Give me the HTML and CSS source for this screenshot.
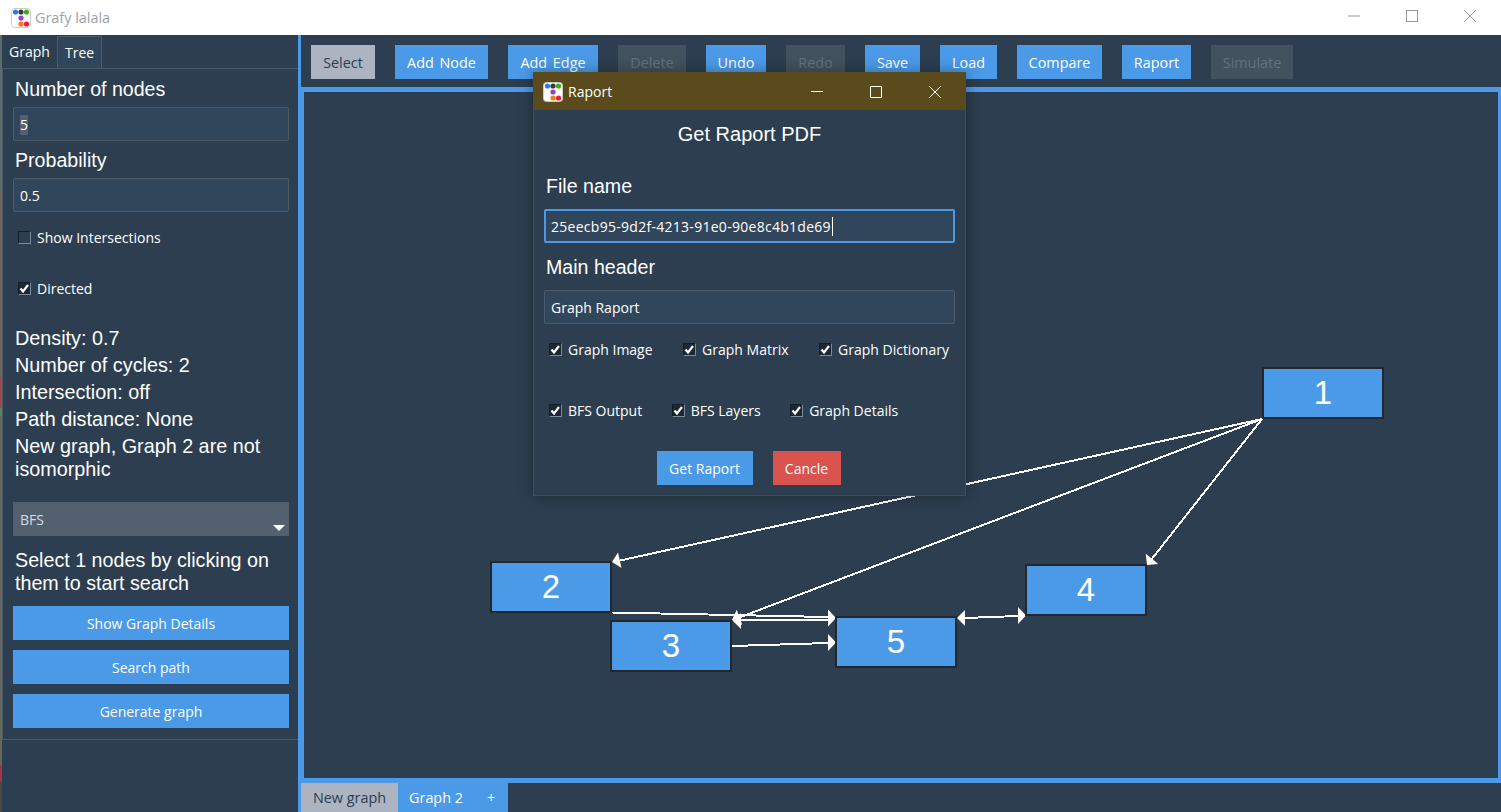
FILE: index.html
```html
<!DOCTYPE html>
<html lang="en">
<head>
  <meta charset="UTF-8" />
  <title>Grafy lalala</title>
  <link rel="stylesheet" href="styles.css">
</head>
<body>

  <svg class="sprites" width="0" height="0">
    <symbol id="appicon" viewBox="0 0 20 20">
      <rect x="0.5" y="0.5" width="19" height="19" rx="3" fill="#fff" stroke="#ccc"/>
      <circle cx="4.5" cy="4" r="2.6" fill="#2f7de0"/>
      <circle cx="10" cy="4" r="2.6" fill="#3a3a3a"/>
      <circle cx="15.5" cy="4" r="2.6" fill="#3fae1e"/>
      <circle cx="10" cy="10" r="2.6" fill="#8e44c4"/>
      <circle cx="10" cy="16" r="2.6" fill="#f47a1c"/>
      <circle cx="15.5" cy="16" r="2.6" fill="#ee1c3c"/>
    </symbol>
    <symbol id="tick" viewBox="0 0 11 11">
      <path d="M1.5 5.5l2.5 3L9 2" fill="none" stroke="#fff" stroke-width="2.2"/>
    </symbol>
  </svg>

  <header class="titlebar">
    <svg class="app-icon"><use href="#appicon"/></svg>
    <span class="app-title">Grafy lalala</span>
    <div class="win-controls">
      <svg width="14" height="14" viewBox="0 0 14 14"><path d="M1 7h12" stroke="#999" fill="none"/></svg>
      <svg width="14" height="14" viewBox="0 0 14 14"><path d="M1.5 1.5h11v11h-11z" stroke="#999" fill="none"/></svg>
      <svg width="14" height="14" viewBox="0 0 14 14"><path d="M1 1l12 12M13 1L1 13" stroke="#999" fill="none"/></svg>
    </div>
  </header>

  <main class="app">
    <div class="desktop-edge"></div>

    <aside class="sidebar">
      <div class="side-tabs">
        <div class="side-tab active">Graph</div>
        <div class="side-tab">Tree</div>
      </div>
      <div class="panel">
        <div class="label">Number of nodes</div>
        <div class="field"><span class="selected">5</span></div>
        <div class="label prob-label">Probability</div>
        <div class="field">0.5</div>
        <div class="check check-first"><span class="box"></span>Show Intersections</div>
        <div class="check check-second"><span class="box on"><svg><use href="#tick"/></svg></span>Directed</div>
        <ul class="stats">
          <li>Density: 0.7</li>
          <li>Number of cycles: 2</li>
          <li>Intersection: off</li>
          <li>Path distance: None</li>
          <li class="iso">New graph, Graph 2 are not isomorphic</li>
        </ul>
        <div class="select">BFS<span class="caret"></span></div>
        <p class="hint">Select 1 nodes by clicking on them to start search</p>
        <button class="btn wide">Show Graph Details</button>
        <button class="btn wide">Search path</button>
        <button class="btn wide">Generate graph</button>
      </div>
    </aside>

    <section class="workspace">
      <nav class="toolbar">
        <button class="btn current t-select">Select</button>
        <button class="btn t-node">Add Node</button>
        <button class="btn t-edge">Add Edge</button>
        <button class="btn off t-delete">Delete</button>
        <button class="btn t-undo">Undo</button>
        <button class="btn off t-redo">Redo</button>
        <button class="btn t-save">Save</button>
        <button class="btn t-load">Load</button>
        <button class="btn t-compare">Compare</button>
        <button class="btn t-raport">Raport</button>
        <button class="btn off t-simulate">Simulate</button>
      </nav>

      <div class="canvas">
        <svg class="edges" width="1194" height="686" viewBox="304 92 1194 686">
          <g stroke="#fff" stroke-width="2" fill="none" shape-rendering="crispEdges">
            <path d="M1262 419L618 561"/>
            <path d="M1262 419L738 618"/>
            <path d="M1262 419L1151 560"/>
            <path d="M612 612.5L828 617"/>
            <path d="M738 620L828 620"/>
            <path d="M732 646L828 643"/>
            <path d="M965 618L1018 616"/>
          </g>
          <g fill="#fff">
            <polygon points="612,562 621.5,568 618,552.5"/>
            <polygon points="732,620 742.3,625 736.7,609.7"/>
            <polygon points="733,621 741,613 741,629"/>
            <polygon points="1147,565 1158.3,564 1145.7,553.7"/>
            <polygon points="836,618 828,609.5 828,626.5"/>
            <polygon points="836,642.5 828,634 828,651"/>
            <polygon points="957,618 965,610 965,626"/>
            <polygon points="1026,615.5 1018,607 1018,624"/>
          </g>
        </svg>
        <div class="node n1">1</div>
        <div class="node n2">2</div>
        <div class="node n3">3</div>
        <div class="node n4">4</div>
        <div class="node n5">5</div>
      </div>

      <div class="graph-tabs">
        <div class="graph-tab active">New graph</div>
        <div class="graph-tab">Graph 2</div>
        <div class="graph-tab add">+</div>
      </div>
    </section>
  </main>

  <div class="dialog">
    <div class="dialog-title">
      <svg class="app-icon"><use href="#appicon"/></svg>
      <span class="dialog-name">Raport</span>
      <div class="win-controls">
        <svg width="14" height="14" viewBox="0 0 14 14"><path d="M1 6.5h12" stroke="#fff" fill="none"/></svg>
        <svg width="14" height="14" viewBox="0 0 14 14"><path d="M1.5 1.5h11v11h-11z" stroke="#fff" fill="none"/></svg>
        <svg width="14" height="14" viewBox="0 0 14 14"><path d="M1 1l12 12M13 1L1 13" stroke="#fff" fill="none"/></svg>
      </div>
    </div>
    <div class="dialog-body">
      <h2>Get Raport PDF</h2>
      <div class="label file-label">File name</div>
      <div class="field focus"><span class="typed">25eecb95-9d2f-4213-91e0-90e8c4b1de69</span></div>
      <div class="label header-label">Main header</div>
      <div class="field">Graph Raport</div>
      <div class="check-row row-one">
        <div class="check"><span class="box on"><svg><use href="#tick"/></svg></span>Graph Image</div>
        <div class="check"><span class="box on"><svg><use href="#tick"/></svg></span>Graph Matrix</div>
        <div class="check"><span class="box on"><svg><use href="#tick"/></svg></span>Graph Dictionary</div>
      </div>
      <div class="check-row row-two">
        <div class="check"><span class="box on"><svg><use href="#tick"/></svg></span>BFS Output</div>
        <div class="check"><span class="box on"><svg><use href="#tick"/></svg></span>BFS Layers</div>
        <div class="check"><span class="box on"><svg><use href="#tick"/></svg></span>Graph Details</div>
      </div>
      <div class="dialog-actions">
        <button class="btn get-raport">Get Raport</button>
        <button class="btn danger">Cancle</button>
      </div>
    </div>
  </div>

</body>
</html>
```

FILE: styles.css
```css
* {
  box-sizing: border-box;
}
html, body {
  margin: 0;
  height: 100%;
  overflow: hidden;
}
body {
  position: relative;
  display: flex;
  flex-direction: column;
  width: 1501px;
  height: 812px;
  background: #2c3e50;
  color: #fff;
  font-family: "Open Sans", "Noto Sans", sans-serif;
  font-size: 14px;
}
.sprites {
  position: absolute;
}

/* window chrome */
.titlebar {
  flex: none;
  display: flex;
  align-items: center;
  height: 35px;
  padding-left: 11px;
  background: #fff;
}
.app-icon {
  width: 20px;
  height: 20px;
}
.app-title {
  margin-left: 4px;
  padding-bottom: 1px;
  color: #9aa3ad;
  font-size: 14.4px;
}
.win-controls {
  display: flex;
  gap: 44px;
  margin-left: auto;
  padding-right: 24px;
}
.titlebar .win-controls {
  margin-bottom: 3px;
}

.app {
  flex: 1;
  display: flex;
  min-height: 0;
}
.desktop-edge {
  flex: none;
  width: 2px;
  background: linear-gradient(#5e6a6e 0 20%, #6f6658 20% 44%, #a14a48 44% 48%, #4f8a5a 48% 49%, #66685f 49% 94%, #a8324a 94% 96%, #4a4a45 96% 100%);
}

/* left panel */
.sidebar {
  flex: none;
  width: 296px;
}
.side-tabs {
  display: flex;
  height: 34px;
  padding-top: 1px;
  border-bottom: 1px solid #4a5b6c;
}
.side-tab {
  padding: 0 7px;
  line-height: 32px;
  border-right: 1px solid #4a5b6c;
}
.side-tab:first-child {
  width: 56px;
}
.side-tab:last-child {
  width: 44px;
  background: #32465b;
  border-top: 1px solid #4a5b6c;
}
.panel {
  padding: 8px 9px 11px 10px;
  border-bottom: 1px solid #4a5b6c;
  border-left: 1px solid #4a5b6c;
}
.label {
  height: 24px;
  margin-bottom: 6px;
  font-family: "Liberation Sans", Arial, sans-serif;
  font-size: 19.6px;
  line-height: 24px;
}
.panel .label {
  margin-left: 2px;
}
.prob-label {
  margin-top: 7px;
}
.field {
  height: 34px;
  padding: 0 6px;
  line-height: 34px;
  background: #32465b;
  border: 1px solid #4a5b6c;
  border-radius: 2px;
}
.selected {
  display: inline-block;
  height: 20px;
  line-height: 20px;
  background: #526070;
}
.field.focus {
  line-height: 32px;
  border: 2px solid #4b9ae8;
  padding: 0 5px;
}
.typed {
  padding-right: 1px;
  border-right: 1px solid #fff;
  letter-spacing: 0.28px;
}
.check {
  display: flex;
  align-items: center;
  gap: 6px;
  height: 20px;
  white-space: nowrap;
}
.panel .check {
  padding-left: 5px;
}
.check-first {
  margin-top: 15px;
}
.check-second {
  margin-top: 31px;
}
.box {
  flex: none;
  width: 13px;
  height: 13px;
  border: 1px solid;
  border-color: #141e28 #7f8b96 #7f8b96 #141e28;
}
.box.on {
  background: #1b2733;
}
.box svg {
  display: block;
  width: 11px;
  height: 11px;
}
.stats {
  margin: 27px 0 0;
  padding: 0 0 0 2px;
  list-style: none;
  font-family: "Liberation Sans", Arial, sans-serif;
  font-size: 19.8px;
  line-height: 27px;
}
.stats .iso {
  padding-top: 2px;
  line-height: 23px;
}
.select {
  position: relative;
  height: 34px;
  margin-top: 21px;
  padding: 0 7px;
  line-height: 36px;
  background: #526070;
  color: #d5dae0;
}
.caret {
  position: absolute;
  right: 4px;
  bottom: 5px;
  border-left: 6px solid transparent;
  border-right: 6px solid transparent;
  border-top: 6px solid #fff;
}
.hint {
  margin: 13px 0 11px 2px;
  font-family: "Liberation Sans", Arial, sans-serif;
  font-size: 19.7px;
  line-height: 23px;
}
.btn {
  height: 34px;
  padding: 0 12px;
  border: none;
  background: #4b9ae8;
  color: #fff;
  font-family: inherit;
  font-size: 14px;
}
.wide {
  display: block;
  width: 100%;
  margin-bottom: 10px;
}
.wide:last-child {
  margin-bottom: 0;
}

/* right side */
.workspace {
  flex: 1;
  display: flex;
  flex-direction: column;
  min-width: 0;
  border-left: 3px solid #4b9ae8;
}
.toolbar {
  flex: none;
  display: flex;
  gap: 20px;
  height: 52px;
  padding: 10px;
}
.toolbar .btn {
  padding: 0;
  font-size: 14.4px;
}
.t-select { width: 64px; }
.t-node { width: 93px; word-spacing: 2px; }
.t-edge { width: 90px; word-spacing: 2px; }
.t-delete { width: 68px; }
.t-undo { width: 60px; }
.t-redo { width: 59px; }
.t-save { width: 55px; }
.t-load { width: 57px; }
.t-compare { width: 85px; }
.t-raport { width: 69px; }
.t-simulate { width: 82px; }
.btn.current {
  background: #abb4c0;
  color: #2c3e50;
}
.btn.off {
  background: #43525f;
  color: #64727f;
}
.canvas {
  flex: 1;
  position: relative;
  border: solid #4b9ae8;
  border-width: 5px 3px 5px 3px;
  min-height: 0;
}
.edges {
  position: absolute;
  left: 0;
  top: 0;
}
.node {
  position: absolute;
  width: 122px;
  height: 52px;
  background: #4b9ae8;
  border: 2px solid #23272b;
  font-family: "Liberation Sans", Arial, sans-serif;
  font-size: 33px;
  line-height: 48px;
  text-align: center;
}
.n1 { left: 958px; top: 275px; }
.n2 { left: 186px; top: 469px; }
.n3 { left: 306px; top: 528px; }
.n4 { left: 721px; top: 472px; }
.n5 { left: 531px; top: 524px; }

.graph-tabs {
  flex: none;
  display: flex;
  height: 29px;
  font-size: 14.4px;
}
.graph-tab {
  width: 76px;
  line-height: 29px;
  text-align: center;
  background: #4b9ae8;
}
.graph-tab.active {
  width: 97px;
  height: 31px;
  margin-top: -2px;
  line-height: 33px;
  background: #abb4c0;
  color: #2c3e50;
}
.graph-tab.add {
  width: 34px;
}

/* raport dialog */
.dialog {
  position: absolute;
  left: 533px;
  top: 72px;
  width: 433px;
  height: 424px;
  background: #2c3e50;
  border: 1px solid #5a4a1c;
  box-shadow: 0 0 14px rgba(0, 0, 0, 0.35);
}
.dialog-title {
  display: flex;
  align-items: center;
  height: 37px;
  padding-left: 9px;
  background: #5a4a1c;
}
.dialog-name {
  margin-left: 5px;
}
.dialog-title .win-controls {
  gap: 45px;
  padding-right: 23px;
}
.dialog-body {
  padding: 12px 10px 0;
}
.dialog-body h2 {
  margin: 0;
  height: 24px;
  font-family: "Liberation Sans", Arial, sans-serif;
  font-size: 20px;
  font-weight: normal;
  line-height: 24px;
  text-align: center;
}
.dialog-body .label {
  margin-left: 2px;
  margin-bottom: 11px;
}
.file-label {
  margin-top: 28px;
}
.header-label {
  margin-top: 12px;
}
.check-row {
  display: flex;
  padding-left: 5px;
}
.row-one {
  gap: 30.5px;
  margin-top: 15px;
}
.row-two {
  gap: 29.5px;
  margin-top: 41px;
}
.dialog-actions {
  display: flex;
  justify-content: center;
  gap: 20px;
  margin-top: 31px;
  padding-right: 2px;
}
.get-raport {
  width: 96px;
}
.btn.danger {
  width: 68px;
  background: #d9534f;
}
```
